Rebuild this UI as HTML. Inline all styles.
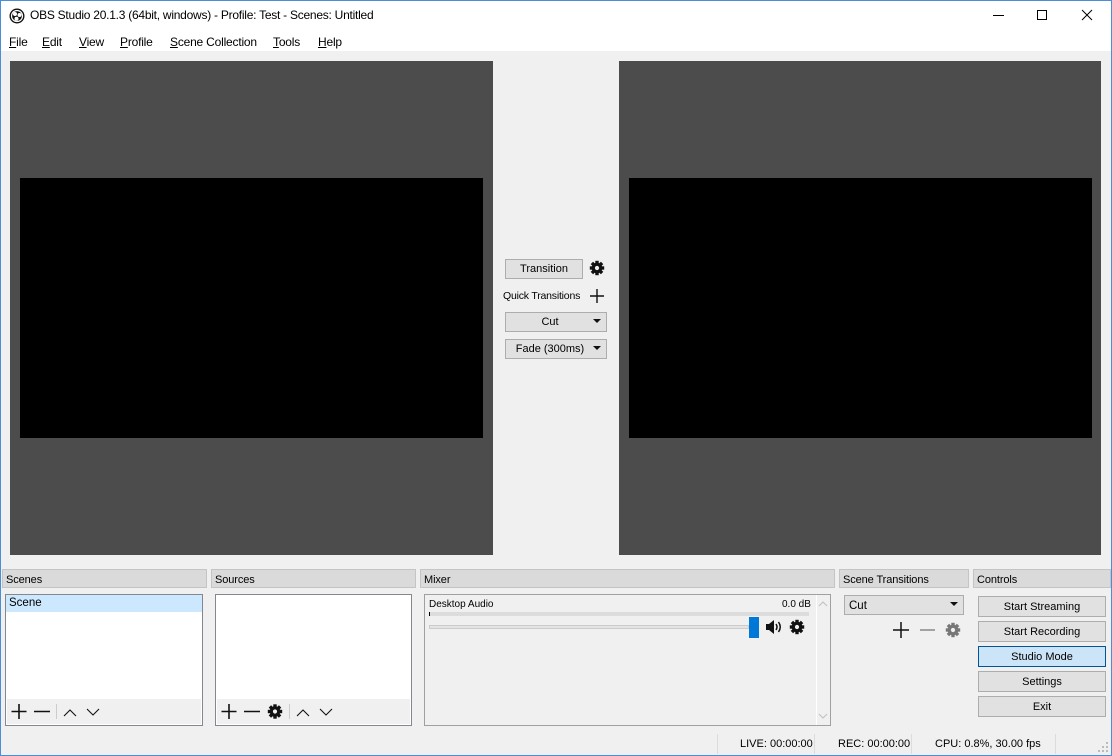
<!DOCTYPE html>
<html><head><meta charset="utf-8">
<style>
*{box-sizing:border-box;margin:0;padding:0}
body{width:1112px;height:756px;overflow:hidden;background:#f0f0f0;font-family:"Liberation Sans",sans-serif;font-size:12px;color:#000;position:relative}
.a{position:absolute}
.win{position:absolute;left:0;top:0;width:1112px;height:756px;border:1px solid #4a8ed8;pointer-events:none}
.hdr{position:absolute;top:569px;height:19px;background:#dadada;border:1px solid #c4c4c4;padding:4px 0 0 3px;font-size:11px;letter-spacing:-0.1px}
.box{position:absolute;border:1px solid #828790;background:#fff}
.btn{position:absolute;background:#e1e1e1;border:1px solid #adadad;text-align:center;font-size:11px;line-height:20px}
.m{position:absolute;top:35px;font-size:12px;letter-spacing:-0.2px}
.m u{text-decoration:underline}
.sep{position:absolute;top:734px;width:1px;height:20px;background:#dcdcdc}
</style></head><body>
<svg width="0" height="0" style="position:absolute"><defs>
<g id="gear"><circle cx="8" cy="8" r="5.3" fill="currentColor"/>
<g fill="currentColor"><rect x="6.3" y="0.8" width="3.4" height="14.4"/><rect x="0.8" y="6.3" width="14.4" height="3.4"/>
<rect x="6.3" y="0.8" width="3.4" height="14.4" transform="rotate(45 8 8)"/><rect x="6.3" y="0.8" width="3.4" height="14.4" transform="rotate(-45 8 8)"/></g>
<circle cx="8" cy="8" r="2.1" fill="#f0f0f0"/></g>
</defs></svg>

<div class="a" style="left:0;top:0;width:1112px;height:51px;background:#fff"></div>
<svg class="a" style="left:9px;top:8px" width="16" height="16" viewBox="0 0 16 16"><circle cx="8" cy="8" r="7.5" fill="#111"/><circle cx="8" cy="8" r="5.5" fill="none" stroke="#fff" stroke-width="1.2"/><circle cx="6" cy="6" r="2" fill="#fff"/><circle cx="10.5" cy="7" r="2" fill="#fff"/><circle cx="7.5" cy="10.8" r="2" fill="#fff"/></svg>
<div class="a" style="left:30px;top:8px;font-size:12px;letter-spacing:-0.25px">OBS Studio 20.1.3 (64bit, windows) - Profile: Test - Scenes: Untitled</div>
<svg class="a" style="left:990px;top:8px" width="110" height="16"><line x1="3" y1="7.5" x2="14" y2="7.5" stroke="#000"/><rect x="47.5" y="2.5" width="9" height="9" fill="none" stroke="#000"/><path d="M92 2 L102 12 M102 2 L92 12" stroke="#000"/></svg>
<div class="m" style="left:9px"><u>F</u>ile</div>
<div class="m" style="left:42px"><u>E</u>dit</div>
<div class="m" style="left:79px"><u>V</u>iew</div>
<div class="m" style="left:120px"><u>P</u>rofile</div>
<div class="m" style="left:170px"><u>S</u>cene Collection</div>
<div class="m" style="left:273px"><u>T</u>ools</div>
<div class="m" style="left:318px"><u>H</u>elp</div>

<div class="a" style="left:10px;top:61px;width:483px;height:494px;background:#4c4c4c"></div>
<div class="a" style="left:20px;top:178px;width:463px;height:260px;background:#000"></div>
<div class="a" style="left:619px;top:61px;width:482px;height:494px;background:#4c4c4c"></div>
<div class="a" style="left:629px;top:178px;width:463px;height:260px;background:#000"></div>

<div class="btn" style="left:505px;top:259px;width:78px;height:20px;line-height:19px">Transition</div>
<svg class="a" style="left:589px;top:260px;color:#111" width="16" height="16"><use href="#gear"/></svg>
<div class="a" style="left:503px;top:290px;font-size:10.5px;letter-spacing:-0.2px">Quick Transitions</div>
<svg class="a" style="left:589px;top:288px" width="16" height="16"><path d="M8 1V15M1 8H15" stroke="#111" stroke-width="1.4"/></svg>
<div class="btn" style="left:505px;top:312px;width:102px;height:20px;line-height:19px;padding-right:12px">Cut</div>
<div class="btn" style="left:505px;top:339px;width:102px;height:20px;line-height:19px;padding-right:12px">Fade (300ms)</div>
<svg class="a" style="left:593px;top:319px" width="9" height="40"><path d="M0 0H8L4 4Z M0 27H8L4 31Z" fill="#111"/></svg>

<div class="hdr" style="left:2px;width:205px">Scenes</div>
<div class="hdr" style="left:211px;width:205px">Sources</div>
<div class="hdr" style="left:420px;width:415px">Mixer</div>
<div class="hdr" style="left:839px;width:130px">Scene Transitions</div>
<div class="hdr" style="left:973px;width:138px">Controls</div>

<div class="box" style="left:5px;top:594px;width:198px;height:132px"></div>
<div class="a" style="left:6px;top:595px;width:196px;height:17px;background:#cce8ff;padding:2px 0 0 3px;font-size:11.5px">Scene</div>
<div class="a" style="left:7px;top:699px;width:194px;height:25px;background:#f0f0f0"></div>
<svg class="a" style="left:7px;top:699px" width="110" height="25"><path d="M12 5V20M4.5 12.5H19.5M27 12.5H43" stroke="#111" stroke-width="1.6"/><line x1="49.5" y1="5" x2="49.5" y2="20" stroke="#ccc"/><path d="M57 17L63 11L69 17M80 10L86 16L92 10" fill="none" stroke="#111" stroke-width="1.1"/></svg>

<div class="box" style="left:215px;top:594px;width:197px;height:132px"></div>
<div class="a" style="left:217px;top:699px;width:193px;height:25px;background:#f0f0f0"></div>
<svg class="a" style="left:217px;top:699px;color:#111" width="130" height="25"><path d="M12 5V20M4.5 12.5H19.5M27 12.5H43" stroke="#111" stroke-width="1.6"/><use href="#gear" x="50" y="4.5"/><line x1="72.5" y1="5" x2="72.5" y2="20" stroke="#ccc"/><path d="M80 17L86 11L92 17M103 10L109 16L115 10" fill="none" stroke="#111" stroke-width="1.1"/></svg>

<div class="box" style="left:424px;top:594px;width:407px;height:132px;background:#f0f0f0;border-color:#a0a0a0"></div>
<div class="a" style="left:816px;top:595px;width:14px;height:130px;background:#f0f0f0;border-left:1px solid #fff"></div>
<svg class="a" style="left:816px;top:598px" width="14" height="126"><path d="M3 8L7 4L11 8M3 116L7 120L11 116" fill="none" stroke="#c0c0c0"/></svg>
<div class="a" style="left:429px;top:599px;font-size:10px">Desktop Audio</div>
<div class="a" style="left:782px;top:599px;font-size:10px">0.0 dB</div>
<div class="a" style="left:429px;top:612px;width:380px;height:4px;background:#dcdcdc;border-left:1px solid #000"></div>
<div class="a" style="left:429px;top:625px;width:320px;height:4px;background:#e4e4e4;border:1px solid #ccc"></div>
<div class="a" style="left:749px;top:617px;width:10px;height:21px;background:#0078d7"></div>
<svg class="a" style="left:765px;top:619px" width="18" height="16"><path d="M1 5H4L9 1V15L4 11H1Z" fill="#111"/><path d="M11 5Q13 8 11 11M13.5 3Q17 8 13.5 13" fill="none" stroke="#111" stroke-width="1.5"/></svg>
<svg class="a" style="left:789px;top:619px;color:#111" width="16" height="16"><use href="#gear"/></svg>

<div class="btn" style="left:844px;top:595px;width:120px;height:20px;text-align:left;padding-left:4px;font-size:11.5px">Cut</div>
<svg class="a" style="left:950px;top:602px" width="9" height="5"><path d="M0 0H8L4 4Z" fill="#111"/></svg>
<svg class="a" style="left:892px;top:621px;color:#777" width="72" height="18"><path d="M9 1V17M1 9H17" stroke="#111" stroke-width="1.5"/><path d="M28 9H43" stroke="#888" stroke-width="1.5"/><use href="#gear" x="53" y="1"/></svg>

<div class="btn" style="left:978px;top:596px;width:128px;height:21px">Start Streaming</div>
<div class="btn" style="left:978px;top:621px;width:128px;height:21px">Start Recording</div>
<div class="btn" style="left:978px;top:646px;width:128px;height:21px;background:#cce4f7;border-color:#005499">Studio Mode</div>
<div class="btn" style="left:978px;top:671px;width:128px;height:21px">Settings</div>
<div class="btn" style="left:978px;top:696px;width:128px;height:21px">Exit</div>

<div class="sep" style="left:717px"></div>
<div class="sep" style="left:814px"></div>
<div class="sep" style="left:911px"></div>
<div class="sep" style="left:1055px"></div>
<div class="a" style="left:740px;top:738px;font-size:11px">LIVE: 00:00:00</div>
<div class="a" style="left:838px;top:738px;font-size:11px">REC: 00:00:00</div>
<div class="a" style="left:935px;top:738px;font-size:11px">CPU: 0.8%, 30.00 fps</div>
<svg class="a" style="left:1098px;top:742px" width="12" height="12"><g fill="#bbb"><rect x="8" y="0" width="2" height="2"/><rect x="4" y="4" width="2" height="2"/><rect x="8" y="4" width="2" height="2"/><rect x="0" y="8" width="2" height="2"/><rect x="4" y="8" width="2" height="2"/><rect x="8" y="8" width="2" height="2"/></g></svg>

<div class="win"></div>
</body></html>
